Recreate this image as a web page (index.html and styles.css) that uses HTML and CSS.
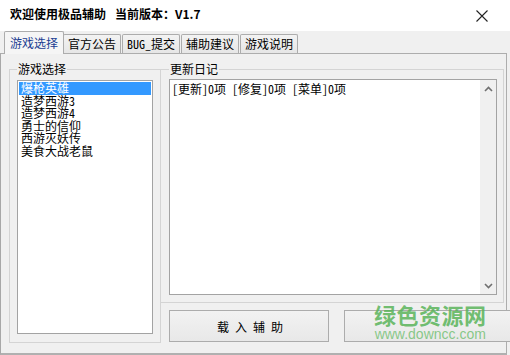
FILE: index.html
```html
<!DOCTYPE html>
<html lang="zh-CN">
<head>
    <meta charset="UTF-8">
    <title>极品辅助</title>
    <link rel="stylesheet" href="styles.css">
</head>
<body>
    <div class="window">
        <div class="titlebar">
            <span class="title">欢迎使用极品辅助<span class="version">当前版本：V1.7</span></span>
            <span class="close">
                <svg width="12" height="12" viewBox="0 0 12 12"><path d="M0.5 0.5 L11.5 11.5 M11.5 0.5 L0.5 11.5" stroke="#222" stroke-width="1.1" fill="none"/></svg>
            </span>
        </div>

        <div class="tabs">
            <div class="tab active">游戏选择</div>
            <div class="tab">官方公告</div>
            <div class="tab bug">BUG_提交</div>
            <div class="tab">辅助建议</div>
            <div class="tab">游戏说明</div>
        </div>

        <div class="panel">
            <fieldset class="group game-group">
                <legend>游戏选择</legend>
                <ul class="listbox">
                    <li class="selected">爆枪英雄</li>
                    <li>造梦西游3</li>
                    <li>造梦西游4</li>
                    <li>勇士的信仰</li>
                    <li>西游灭妖传</li>
                    <li>美食大战老鼠</li>
                </ul>
            </fieldset>

            <div class="main">
                <fieldset class="group log-group">
                    <legend>更新日记</legend>
                    <div class="textbox">
                        <div class="log-text">[更新]0项 [修复]0项 [菜单]0项</div>
                        <div class="scrollbar">
                            <span class="arrow"><svg width="9" height="6" viewBox="0 0 9 6"><path d="M1 5 L4.5 1.5 L8 5" stroke="#707070" stroke-width="1.6" fill="none"/></svg></span>
                            <span class="arrow"><svg width="9" height="6" viewBox="0 0 9 6"><path d="M1 1 L4.5 4.5 L8 1" stroke="#707070" stroke-width="1.6" fill="none"/></svg></span>
                        </div>
                    </div>
                </fieldset>

                <div class="actions">
                    <button class="btn">载 入 辅 助</button>
                    <button class="btn wide"></button>
                </div>
            </div>
        </div>

        <!-- watermark -->
        <div class="watermark">
            <div class="wm-name">绿色资源网</div>
            <div class="wm-url">www.downcc.com</div>
        </div>
    </div>
</body>
</html>
```

FILE: styles.css
```css
body {
    margin: 0;
    padding: 0;
    background: #f0f0f0;
    font-family: "Noto Sans CJK SC", "Liberation Sans", sans-serif;
    font-size: 12px;
    color: #000;
}

.window {
    position: relative;
    width: 510px;
    height: 355px;
    background: #f0f0f0;
    overflow: hidden;
}

.titlebar {
    height: 31px;
    box-sizing: border-box;
    padding: 0 22px 4px 10px;
    background: #ffffff;
    display: flex;
    align-items: center;
    justify-content: space-between;
}

.title {
    font-weight: bold;
    font-size: 12px;
    line-height: 14px;
}

.version {
    margin-left: 9px;
}

.close {
    display: flex;
    margin-top: 4px;
}

.tabs {
    height: 22px;
    display: flex;
    align-items: flex-end;
    padding-left: 4px;
}

.tab {
    box-sizing: border-box;
    width: 58px;
    height: 19px;
    margin-right: 1px;
    border: 1px solid #acacac;
    border-bottom: none;
    border-radius: 2px 2px 0 0;
    background: linear-gradient(#f3f3f3, #e6e6e6);
    text-align: center;
    line-height: 17px;
    font-size: 12px;
}

.tab.active {
    width: 60px;
    height: 23px;
    margin-bottom: -1px;
    margin-right: -1px;
    position: relative;
    z-index: 1;
    background: #f5f5f5;
    color: #1b3d92;
    line-height: 22px;
}

.tab.bug {
    font-family: "Noto Sans Mono CJK SC", "Noto Sans CJK SC", monospace;
}

.panel {
    height: 302px;
    box-sizing: border-box;
    border-top: 1px solid #adadad;
    border-right: 1px solid #adadad;
    border-left: 1px solid #a8a8a8;
    border-bottom: 2px solid #b0b0b0;
    width: 507px;
    padding: 8px 0 0 8px;
    display: flex;
    align-items: flex-start;
}

.group {
    margin: 0;
    border: 1px solid #d4d4d4;
    box-sizing: border-box;
    min-width: 0;
    flex-shrink: 0;
}

.group legend {
    padding: 0 1px;
    font-size: 12px;
    line-height: 14px;
}

.game-group {
    width: 152px;
    height: 281px;
    padding: 0 7px 8px 7px;
}

.listbox {
    list-style: none;
    margin: 4px 0 0 0;
    padding: 1px 1px 0 1px;
    height: 254px;
    box-sizing: border-box;
    background: #ffffff;
    border: 1px solid #a3a3a3;
    font-family: "Noto Sans Mono CJK SC", "Noto Sans CJK SC", monospace;
}

.listbox li {
    height: 12.5px;
    line-height: 12.5px;
    padding-left: 2px;
    white-space: nowrap;
}

.listbox li.selected {
    background: #3399ff;
    color: #ffffff;
}

.main {
    display: flex;
    flex-direction: column;
    flex-shrink: 0;
    width: 344px;
    margin-left: -1px;
}

.log-group {
    width: 344px;
    height: 241px;
    padding: 0 6px 7px 8px;
}

.textbox {
    margin-top: 3px;
    height: 216px;
    box-sizing: border-box;
    background: #ffffff;
    border: 1px solid #a3a3a3;
    display: flex;
}

.log-text {
    flex: 1;
    padding: 2px 2px;
    line-height: 14px;
    white-space: pre;
    font-family: "Noto Sans Mono CJK SC", "Noto Sans CJK SC", monospace;
}

.scrollbar {
    width: 16px;
    background: #f0f0f0;
    display: flex;
    flex-direction: column;
    justify-content: space-between;
}

.arrow {
    height: 17px;
    display: flex;
    align-items: center;
    justify-content: center;
}

.actions {
    display: flex;
    margin-top: 7px;
    padding-left: 9px;
}

.btn {
    width: 160px;
    height: 32px;
    margin-right: 15px;
    border: 1px solid #acacac;
    background: linear-gradient(#f2f2f2, #e8e8e8);
    font-family: "Noto Sans Mono CJK SC", "Noto Sans CJK SC", monospace;
    font-size: 12px;
    white-space: pre;
    padding: 0 0 0 2px;
    flex-shrink: 0;
}

.btn.wide {
    width: 175px;
}

.watermark {
    position: absolute;
    left: 374px;
    top: 301px;
    text-align: center;
    pointer-events: none;
}

.wm-name {
    font-size: 22px;
    font-weight: bold;
    line-height: 26px;
    letter-spacing: 0.5px;
    color: rgba(90, 180, 90, 0.85);
}

.wm-url {
    font-family: "Liberation Sans", Arial, sans-serif;
    font-size: 14px;
    line-height: 14px;
    color: rgba(110, 190, 110, 0.8);
}
```
